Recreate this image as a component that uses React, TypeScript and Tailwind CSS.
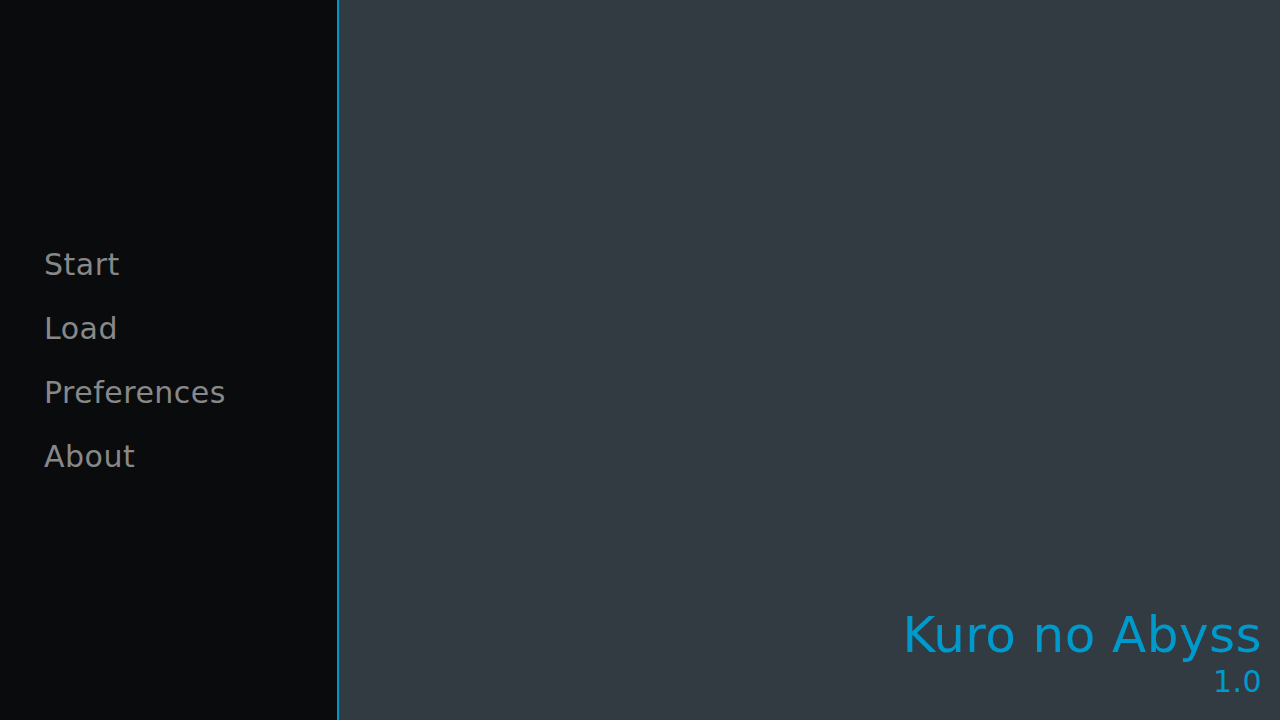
export default function App() {
  return (
    <div
      className="flex h-[720px] w-[1280px] overflow-hidden bg-[#313b41]"
      style={{ fontFamily: '"DejaVu Sans", sans-serif' }}
    >
      <div className="flex h-full w-[339px] shrink-0 flex-col justify-center gap-[29px] border-r-2 border-[#0099cc] bg-[#0a0b0d] pl-[44px]">
        {["Start", "Load", "Preferences", "About"].map((t) => (
          <div key={t} className="text-[30px] leading-[35px] tracking-[0.5px] text-[#888888]">
            {t}
          </div>
        ))}
      </div>
      <div className="flex flex-1 flex-col items-end justify-end pb-[21px] pr-[18px] text-[#0099cc]">
        <div className="text-[50px] leading-[58px] tracking-[0.45px]">Kuro no Abyss</div>
        <div className="text-[30px] leading-[35px] tracking-[0.4px]">1.0</div>
      </div>
    </div>
  );
}
